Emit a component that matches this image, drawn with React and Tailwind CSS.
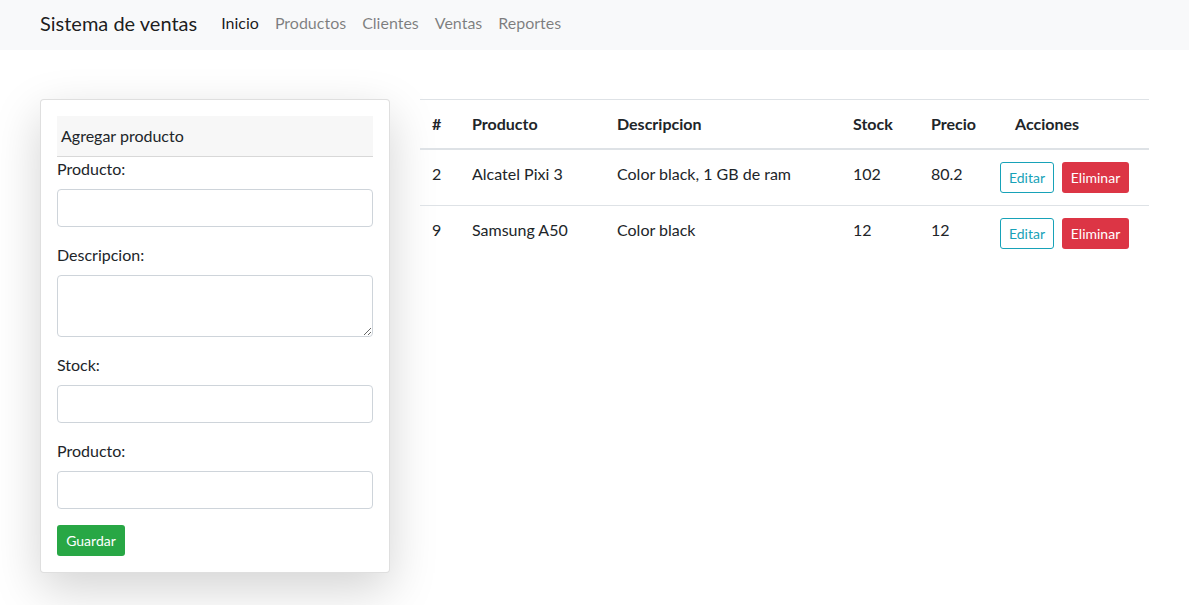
import React from 'react';

const links = ['Productos', 'Clientes', 'Ventas', 'Reportes'];

const productos = [
    { id: 2, nombre: 'Alcatel Pixi 3', descripcion: 'Color black, 1 GB de ram', stock: 102, precio: '80.2' },
    { id: 9, nombre: 'Samsung A50', descripcion: 'Color black', stock: 12, precio: '12' },
];

const Field = ({ label, textarea }) => (
    <div className="mb-4">
        <label className="block mb-2 leading-6">{label}</label>
        {textarea ? (
            <textarea
                rows={2}
                className="block w-full h-[62px] border border-[#ced4da] rounded-[4px] px-3 py-1.5 outline-none"
            />
        ) : (
            <input
                type="text"
                className="block w-full h-[38px] border border-[#ced4da] rounded-[4px] px-3 outline-none"
            />
        )}
    </div>
);

export default function App() {
    return (
        <div
            className="min-h-screen bg-white text-[#212529] text-base"
            style={{ fontFamily: 'Lato, "Noto Sans", sans-serif' }}
        >
            <nav className="h-[50px] bg-[#f8f9fa] flex items-center px-[40px] pb-1">
                <span className="text-[20px] mr-4 text-black/90">Sistema de ventas</span>
                <a className="px-2 text-black/90">Inicio</a>
                {links.map((l) => (
                    <a key={l} className="px-2 text-black/50">
                        {l}
                    </a>
                ))}
            </nav>

            <div className="flex items-start gap-[30px] px-[40px] mt-[49px]">
                <div className="w-[350px] shrink-0 bg-white border border-black/[.125] rounded-[4px] p-4 shadow-[0_1rem_3rem_rgba(0,0,0,0.175)]">
                    <div className="h-[41px] bg-[#f7f7f7] border-b border-black/[.125] px-1 flex items-center">
                        Agregar producto
                    </div>
                    <Field label="Producto:" />
                    <Field label="Descripcion:" textarea />
                    <Field label="Stock:" />
                    <Field label="Producto:" />
                    <button className="h-[31px] w-[68px] bg-[#28a745] text-white text-sm rounded-[3px]">
                        Guardar
                    </button>
                </div>

                <table className="w-[730px] border-collapse">
                    <thead>
                        <tr className="border-t border-[#dee2e6] border-b-2">
                            <th className="w-[40px] text-left font-bold p-3 leading-6">#</th>
                            <th className="w-[145px] text-left font-bold p-3 leading-6">Producto</th>
                            <th className="w-[236px] text-left font-bold p-3 leading-6">Descripcion</th>
                            <th className="w-[78px] text-left font-bold p-3 leading-6">Stock</th>
                            <th className="w-[69px] text-left font-bold p-3 leading-6">Precio</th>
                            <th className="text-left font-bold py-3 pl-[27px] leading-6">Acciones</th>
                        </tr>
                    </thead>
                    <tbody>
                        {productos.map((p) => (
                            <tr key={p.id} className="border-t border-[#dee2e6]">
                                <td className="p-3 align-top leading-6">{p.id}</td>
                                <td className="p-3 align-top leading-6">{p.nombre}</td>
                                <td className="p-3 align-top leading-6">{p.descripcion}</td>
                                <td className="p-3 align-top leading-6">{p.stock}</td>
                                <td className="p-3 align-top leading-6">{p.precio}</td>
                                <td className="p-3 align-top">
                                    <div className="flex gap-[8px]">
                                        <button className="h-[31px] w-[54px] border border-[#17a2b8] text-[#17a2b8] text-sm rounded-[3px]">
                                            Editar
                                        </button>
                                        <button className="h-[31px] w-[67px] bg-[#dc3545] text-white text-sm rounded-[3px]">
                                            Eliminar
                                        </button>
                                    </div>
                                </td>
                            </tr>
                        ))}
                    </tbody>
                </table>
            </div>
        </div>
    );
}
